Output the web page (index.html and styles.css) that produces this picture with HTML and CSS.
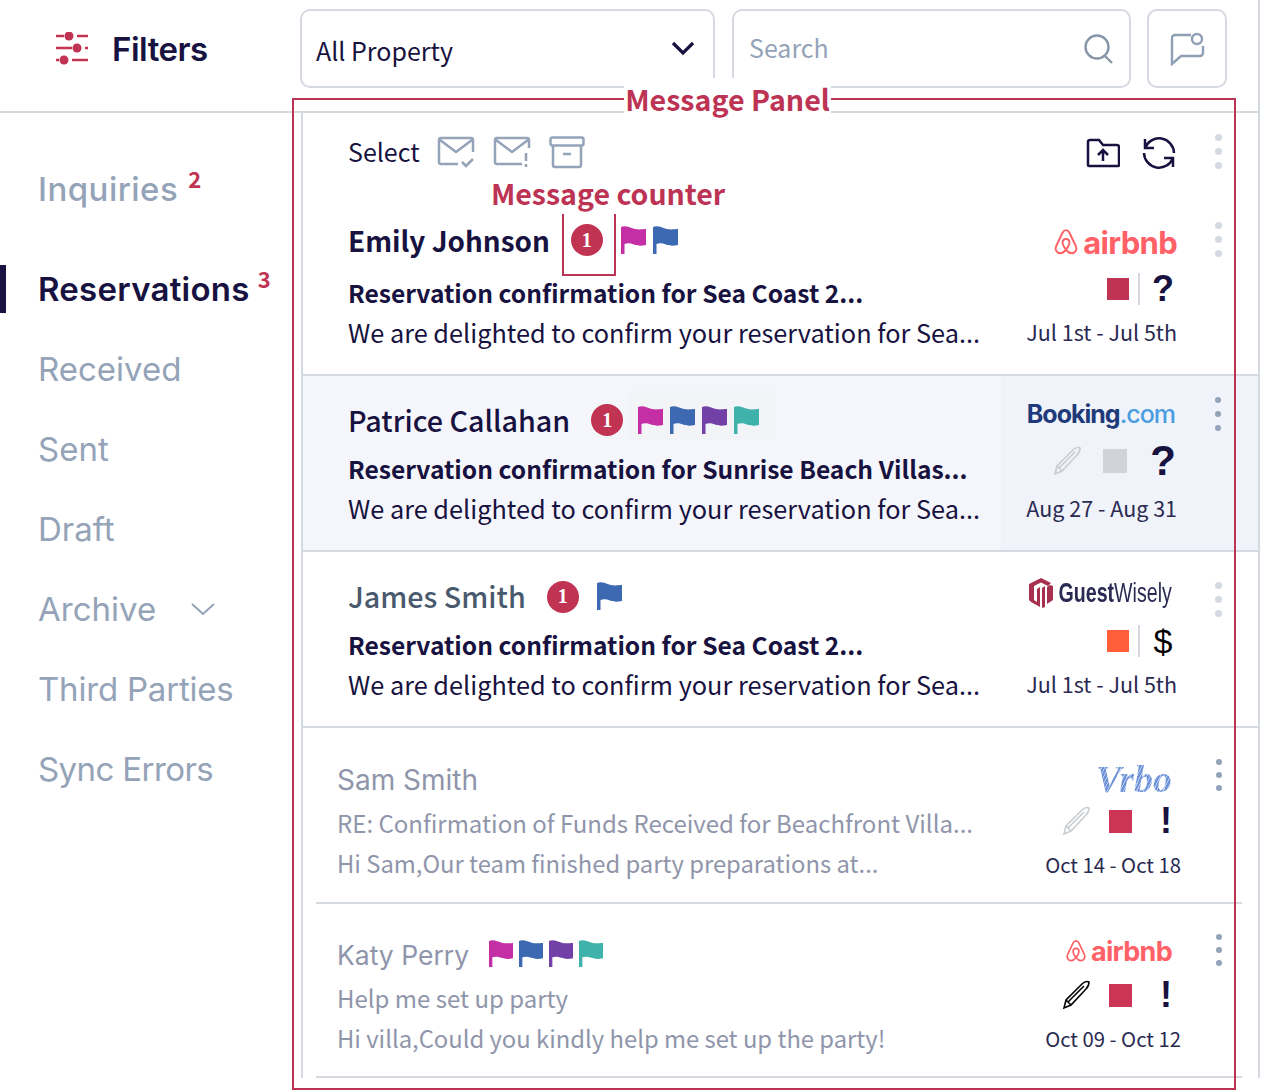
FILE: index.html
```html
<!DOCTYPE html>
<html lang="en">
<head>
  <meta charset="UTF-8" />
  <title>Message Panel</title>
  <link rel="stylesheet" href="styles.css">
</head>
<body>
  <svg class="defs" width="0" height="0">
    <symbol id="flag" viewBox="0 0 25 28">
      <path fill="currentColor" d="M0 1C5-1 9 2 14 3c4 1 8 0 11 0v16c-5 1-8 1-12-.5C9 17 6 17 3.5 18v10H0z"/>
    </symbol>
    <symbol id="pencil" viewBox="0 0 28 30">
      <path fill="none" stroke="currentColor" stroke-width="1.6" d="M2 28l2-8L20 4c2-2 5-3 7-2 0 3-1 5-3 7L9 25zM6 22L22 6M4 20l5 5"/>
    </symbol>
    <symbol id="belo" viewBox="0 0 24 26">
      <path fill="none" stroke="currentColor" stroke-width="1.8" d="M12 2c-1.400 0-2.400.8-3.200 2.400L3 16.500c-1.800 3.800.6 7 3.800 7 2 0 3.600-1.200 5.200-3.400 1.600 2.200 3.200 3.400 5.200 3.400 3.200 0 5.600-3.200 3.800-7L15.200 4.400C14.400 2.800 13.400 2 12 2zM12 20.100c-2-2.600-3.200-4.800-3.200-6.600 0-2 1.400-3.300 3.200-3.300s3.200 1.300 3.200 3.300c0 1.800-1.200 4-3.200 6.600z"/>
    </symbol>
  </svg>

  <div class="app">
    <header class="topbar">
      <div class="filters-head">
        <svg class="filters-icon" width="32" height="33" viewBox="0 0 32 33" fill="none" stroke="currentColor" stroke-width="2.600">
          <path d="M0 4h8M21 4h11M0 16h16M29 16h3M0 28h3M16 28h16"/>
          <circle cx="13" cy="4" r="4.500" fill="currentColor" stroke="none"/>
          <circle cx="21" cy="16" r="4.500" fill="currentColor" stroke="none"/>
          <circle cx="8" cy="28" r="4.500" fill="currentColor" stroke="none"/>
        </svg>
        <span class="filters-title">Filters</span>
      </div>
      <div class="box select-box">
        <span class="select-text">All Property</span>
        <svg width="24" height="15" viewBox="0 0 24 15" fill="none" stroke="#17123f" stroke-width="3.200"><path d="M2 2l10 10L22 2"/></svg>
      </div>
      <div class="box search-box">
        <span class="search-text">Search</span>
        <svg width="30" height="31" viewBox="0 0 30 31" fill="none" stroke="#8796a8" stroke-width="2.400"><circle cx="13" cy="14" r="11.500"/><path d="M21 23l7 7"/></svg>
      </div>
      <div class="box chat-box">
        <svg width="35" height="34" viewBox="0 0 35 34" fill="none" stroke="#8fa0b5" stroke-width="2.400"><path d="M21 3H5a3 3 0 0 0-3 3v26l9-8h19a3 3 0 0 0 3-3v-7"/><circle cx="27" cy="7" r="5"/></svg>
      </div>
    </header>

    <div class="body">
      <nav class="sidebar">
        <a class="nav-item nav-first">Inquiries<sup>2</sup></a>
        <a class="nav-item active">Reservations<sup>3</sup></a>
        <a class="nav-item">Received</a>
        <a class="nav-item">Sent</a>
        <a class="nav-item">Draft</a>
        <a class="nav-item">Archive<svg class="nav-chevron" width="24" height="13" viewBox="0 0 24 13" fill="none" stroke="currentColor" stroke-width="2"><path d="M1 1l11 10L23 1"/></svg></a>
        <a class="nav-item nav-third">Third Parties</a>
        <a class="nav-item nav-sync">Sync Errors</a>
      </nav>

      <main class="panel">
        <div class="toolbar">
          <span class="select-label">Select</span>
          <svg class="tool-icon" width="38" height="33" viewBox="0 0 38 33"><path d="M36 16V4a2 2 0 0 0-2-2H4a2 2 0 0 0-2 2v22a2 2 0 0 0 2 2h17M3 4l16 12L35 4M25 26l4 4 7-7"/></svg>
          <svg class="tool-icon" width="38" height="33" viewBox="0 0 38 33"><path d="M36 12V4a2 2 0 0 0-2-2H4a2 2 0 0 0-2 2v22a2 2 0 0 0 2 2h25M3 4l16 12L35 4M33 17v8M33 28v3"/></svg>
          <svg class="tool-icon" width="36" height="33" viewBox="0 0 36 33"><rect x="1.500" y="1.500" width="33" height="8" rx="2"/><path d="M4 10v19a2 2 0 0 0 2 2h24a2 2 0 0 0 2-2V10M14 18h8"/></svg>
          <span class="spacer"></span>
          <svg class="tool-icon dark" width="34" height="30" viewBox="0 0 34 30"><path d="M2 4a2 2 0 0 1 2-2h9l4 5h14a2 2 0 0 1 2 2v18a1 1 0 0 1-1 1H3a1 1 0 0 1-1-1zM17 23V12M12 17l5-5 5 5"/></svg>
          <svg class="tool-icon dark refresh" width="34" height="34" viewBox="0 0 34 34"><path d="M3 12A15 15 0 0 1 32 17M3 3v9h9M31 22A15 15 0 0 1 2 17M31 31v-9h-9"/></svg>
          <span class="dots toolbar-dots"><i></i><i></i><i></i></span>
        </div>

        <article class="row row-1">
          <div class="main">
            <div class="head">
              <span class="name">Emily Johnson</span>
              <span class="badge">1</span>
              <span class="flags">
                <svg class="flag magenta"><use href="#flag"/></svg>
                <svg class="flag blue"><use href="#flag"/></svg>
              </span>
            </div>
            <div class="subject">Reservation confirmation for Sea Coast 2...</div>
            <div class="preview">We are delighted to confirm your reservation for Sea...</div>
          </div>
          <div class="side">
            <div class="logo airbnb"><svg class="belo"><use href="#belo"/></svg><span>airbnb</span></div>
            <div class="status">
              <span class="square red"></span><span class="divider"></span><span class="mark">?</span>
            </div>
            <div class="dates">Jul 1st - Jul 5th</div>
          </div>
          <span class="dots"><i></i><i></i><i></i></span>
        </article>

        <article class="row row-2 selected">
          <div class="main">
            <div class="head">
              <span class="name">Patrice Callahan</span>
              <span class="badge">1</span>
              <span class="flags flags-box">
                <svg class="flag magenta"><use href="#flag"/></svg>
                <svg class="flag blue"><use href="#flag"/></svg>
                <svg class="flag purple"><use href="#flag"/></svg>
                <svg class="flag teal"><use href="#flag"/></svg>
              </span>
            </div>
            <div class="subject">Reservation confirmation for Sunrise Beach Villas...</div>
            <div class="preview">We are delighted to confirm your reservation for Sea...</div>
          </div>
          <div class="side">
            <div class="logo booking">Booking<span>.com</span></div>
            <div class="status">
              <svg class="pencil muted"><use href="#pencil"/></svg>
              <span class="square grey"></span><span class="mark big">?</span>
            </div>
            <div class="dates">Aug 27 - Aug 31</div>
          </div>
          <span class="dots strong"><i></i><i></i><i></i></span>
        </article>

        <article class="row row-3">
          <div class="main">
            <div class="head">
              <span class="name slate">James Smith</span>
              <span class="badge">1</span>
              <span class="flags">
                <svg class="flag blue"><use href="#flag"/></svg>
              </span>
            </div>
            <div class="subject">Reservation confirmation for Sea Coast 2...</div>
            <div class="preview">We are delighted to confirm your reservation for Sea...</div>
          </div>
          <div class="side">
            <div class="logo guestwisely">
              <svg width="24" height="30" viewBox="0 0 24 30"><path fill="#a8304f" d="M12 0l10 5-3 3-7-3.500L5 8v14l3 2V11l3-2v20L2 24 0 22V6zM13 10l3-2v21l-3 1zM18 9l3-2 3 1v14l-6 4z"/></svg>
              <span class="gw-text"><b>Guest</b>Wisely</span>
            </div>
            <div class="status">
              <span class="square orange"></span><span class="divider"></span><span class="mark black">$</span>
            </div>
            <div class="dates">Jul 1st - Jul 5th</div>
          </div>
          <span class="dots"><i></i><i></i><i></i></span>
        </article>

        <article class="row row-4 read">
          <div class="main">
            <div class="head">
              <span class="name">Sam Smith</span>
            </div>
            <div class="subject">RE: Confirmation of Funds Received for Beachfront Villa...</div>
            <div class="preview">Hi Sam,Our team finished party preparations at...</div>
          </div>
          <div class="side">
            <div class="logo vrbo">Vrbo</div>
            <div class="status">
              <svg class="pencil muted"><use href="#pencil"/></svg>
              <span class="square red-bright"></span><span class="mark">!</span>
            </div>
            <div class="dates">Oct 14 - Oct 18</div>
          </div>
          <span class="dots strong"><i></i><i></i><i></i></span>
        </article>

        <article class="row row-5 read">
          <div class="main">
            <div class="head">
              <span class="name">Katy Perry</span>
              <span class="flags">
                <svg class="flag magenta"><use href="#flag"/></svg>
                <svg class="flag blue"><use href="#flag"/></svg>
                <svg class="flag purple"><use href="#flag"/></svg>
                <svg class="flag teal"><use href="#flag"/></svg>
              </span>
            </div>
            <div class="subject">Help me set up party</div>
            <div class="preview">Hi villa,Could you kindly help me set up the party!</div>
          </div>
          <div class="side">
            <div class="logo airbnb"><svg class="belo"><use href="#belo"/></svg><span>airbnb</span></div>
            <div class="status">
              <svg class="pencil"><use href="#pencil"/></svg>
              <span class="square red-bright"></span><span class="mark">!</span>
            </div>
            <div class="dates">Oct 09 - Oct 12</div>
          </div>
          <span class="dots strong"><i></i><i></i><i></i></span>
        </article>
      </main>
    </div>

    <!-- annotations drawn over the screenshot -->
    <div class="note-frame"></div>
    <div class="note-title">Message Panel</div>
    <div class="note-counter">Message counter</div>
    <div class="note-bracket"></div>
  </div>
</body>
</html>
```

FILE: styles.css
```css
* {
  box-sizing: border-box;
}
html, body {
  margin: 0;
  background: #fff;
}
body {
  min-height: 1090px;
  font-family: "Noto Sans CJK SC", "Noto Sans", sans-serif;
  color: #17123f;
}
.defs {
  position: absolute;
}
.app {
  position: relative;
  width: 1260px;
  height: 1078px;
  border-right: 2px solid #d5d9e2;
}

/* top bar */
.topbar {
  display: flex;
  align-items: flex-start;
  height: 113px;
  padding-top: 9px;
  border-bottom: 2px solid #d5d9e2;
}
.filters-head {
  display: flex;
  align-items: center;
  width: 300px;
  height: 79px;
  padding-left: 56px;
}
.filters-icon {
  flex: none;
  color: #c03353;
}
.filters-title {
  margin-left: 24px;
  font-family: Inter, sans-serif;
  font-size: 33px;
  font-weight: 600;
  letter-spacing: -0.5px;
}
.box {
  display: flex;
  align-items: center;
  height: 79px;
  border: 2px solid #d5d9e2;
  border-radius: 10px;
  font-size: 25px;
}
.select-box {
  justify-content: space-between;
  width: 415px;
  padding: 0 18px 0 14px;
}
.select-text {
  margin-top: 2px;
}
.search-box {
  justify-content: space-between;
  width: 399px;
  margin-left: 17px;
  padding: 0 15px 0 15px;
  color: #94a3b8;
}
.search-text {
  margin-bottom: 4px;
}
.chat-box {
  justify-content: center;
  width: 80px;
  margin-left: 16px;
}

/* sidebar */
.body {
  display: flex;
}
.sidebar {
  display: flex;
  flex: none;
  flex-direction: column;
  width: 301px;
  padding-top: 36px;
}
.nav-item {
  display: flex;
  align-items: center;
  height: 80px;
  padding-left: 38px;
  font-family: Inter, sans-serif;
  font-size: 33px;
  color: #94a3b8;
  white-space: nowrap;
}
.nav-first {
  margin-bottom: 20px;
  font-weight: 500;
  letter-spacing: 0.45px;
}
.nav-third {
  letter-spacing: -0.2px;
}
.nav-sync {
  letter-spacing: -0.6px;
}
.nav-item sup {
  align-self: flex-start;
  margin: 14px 0 0 10px;
  font-family: "Noto Sans CJK SC", sans-serif;
  font-size: 22px;
  font-weight: 700;
  line-height: 30px;
  color: #c03353;
}
.nav-item.active {
  position: relative;
  font-weight: 600;
  letter-spacing: 0.25px;
  color: #17123f;
}
.nav-item.active sup {
  margin-left: 8px;
}
.nav-item.active::before {
  content: "";
  position: absolute;
  left: 0;
  top: 16px;
  width: 6px;
  height: 48px;
  background: #17123f;
}
.nav-chevron {
  margin-left: 35px;
}

/* message panel */
.panel {
  flex: 1;
  min-width: 0;
  border-left: 2px solid #d5d9e2;
}
.toolbar {
  display: flex;
  align-items: center;
  height: 87px;
  padding: 0 0 8px 45px;
}
.select-label {
  width: 89px;
  margin-bottom: 3px;
  font-size: 25px;
}
.tool-icon {
  margin-right: 18px;
  fill: none;
  stroke: #94a3b8;
  stroke-width: 2.500;
}
.tool-icon.dark {
  margin-right: 22px;
  stroke: #17123f;
}
.tool-icon.refresh {
  margin-right: 0;
}
.spacer {
  flex: 1;
}
.dots {
  display: flex;
  flex: none;
  flex-direction: column;
  gap: 7px;
  margin: 22px 36px 0 38px;
  align-self: flex-start;
}
.dots i {
  width: 7px;
  height: 7px;
  border-radius: 50%;
  background: #d5d9e2;
}
.dots.strong i {
  width: 6px;
  height: 6px;
  background: #93a3b8;
}
.toolbar-dots {
  margin: 21px 36px 0 39px;
}

.row {
  display: flex;
  height: 176px;
  border-bottom: 2px solid #d5d9e2;
}
.main {
  flex: 1;
  min-width: 0;
  padding-left: 45px;
  white-space: nowrap;
}
.head {
  display: flex;
  align-items: center;
  height: 40px;
  margin-bottom: 6px;
}
.name {
  margin-bottom: 4px;
  font-size: 28.700px;
  font-weight: 500;
  line-height: 40px;
}
.row-1 .name {
  font-size: 27.900px;
  font-weight: 600;
}
.name.slate {
  color: #4a5a6e;
}
.badge {
  display: flex;
  align-items: center;
  justify-content: center;
  width: 32px;
  height: 32px;
  margin: 0 0 4px 21px;
  border-radius: 50%;
  background: #c03353;
  color: #fff;
  font-family: "Liberation Serif", serif;
  font-size: 20px;
  font-weight: 700;
}
.flags {
  display: flex;
  gap: 7px;
  margin: 0 0 4px 18px;
}
.flag {
  display: block;
  width: 25px;
  height: 28px;
}
.flags-box {
  margin: 0 0 14px 6px;
  padding: 15px 16px 6px 9px;
  background: #f2f4f8;
}
.magenta { color: #c42fa5; }
.blue { color: #3d68b2; }
.purple { color: #7340a8; }
.teal { color: #3fb2ac; }
.subject {
  font-size: 24.600px;
  font-weight: 700;
  line-height: 40px;
}
.preview {
  font-size: 25.300px;
  line-height: 40px;
}

.side {
  display: flex;
  flex: none;
  flex-direction: column;
  align-items: flex-end;
}
.logo {
  display: flex;
  align-items: center;
  height: 40px;
  margin-bottom: 7px;
}
.airbnb {
  color: #ff6167;
  font-family: Inter, sans-serif;
  font-size: 31px;
  font-weight: 700;
  letter-spacing: -0.7px;
}
.belo {
  width: 26px;
  height: 28px;
  margin-right: 4px;
}
.booking {
  margin-right: 2px;
  color: #1f3a7a;
  font-family: Inter, sans-serif;
  font-size: 25px;
  font-weight: 700;
  letter-spacing: -1px;
}
.booking span {
  color: #4a9de0;
  font-weight: 500;
}
.guestwisely {
  margin-right: 5px;
  color: #2a2a52;
  font-family: "Liberation Sans", sans-serif;
  font-size: 28px;
}
.gw-text {
  margin-left: -43px;
  transform: scaleX(0.7);
  transform-origin: right center;
}
.vrbo {
  font-family: "Liberation Serif", serif;
  font-size: 38px;
  font-style: italic;
  font-weight: 700;
  background: repeating-linear-gradient(115deg, #6f93d8 0 2px, #b7c9ec 2px 3px);
  -webkit-background-clip: text;
  background-clip: text;
  color: transparent;
}
.status {
  display: flex;
  align-items: center;
  height: 40px;
  margin-bottom: 3px;
}
.square {
  width: 22px;
  height: 22px;
}
.red { background: #c03353; }
.red-bright { background: #cd3557; }
.grey { background: #d0d3d9; }
.orange { background: #ff5f38; }
.divider {
  width: 2px;
  height: 32px;
  margin: 0 8px 0 9px;
  background: #d5d9e2;
}
.mark {
  width: 30px;
  margin-right: -1px;
  font-family: "Liberation Sans", sans-serif;
  font-size: 36px;
  font-weight: 700;
  line-height: 40px;
  text-align: center;
}
.mark.big {
  font-size: 42px;
}
.mark.black {
  color: #000;
  font-weight: 400;
  font-size: 34px;
}
.pencil {
  width: 28px;
  height: 30px;
  color: #000;
}
.pencil.muted {
  color: #c9ccd2;
}
.dates {
  font-size: 21.500px;
  line-height: 40px;
  color: #2a2a52;
  white-space: nowrap;
}

.row-1 .main { padding-top: 22px; }
.row-1 .head { margin-bottom: 10px; }
.row-1 .side { padding-top: 22px; }

.selected {
  background: linear-gradient(90deg, #f5f6fb 0 698px, #f0f3f9 698px);
}
.selected .side {
  padding-top: 18px;
}
.row-2 .main { padding-top: 26px; }
.row-2 .status { margin-bottom: 7px; }
.row-2 .square { width: 24px; height: 24px; margin: 0 21px 0 22px; }
.row-2 .dots { gap: 8px; margin: 21px 37px 0 38px; }

.row-3 .main { padding-top: 26px; }
.row-3 .side { padding-top: 21px; }
.row-3 .logo { margin-bottom: 8px; }
.row-3 .dots { margin-top: 30px; }
.row-3 .badge { margin-bottom: 3px; }

.read {
  margin: 0 16px 0 13px;
}
.read .main {
  padding-left: 21px;
  color: #8f95aa;
}
.read .name {
  margin-bottom: 0;
  font-family: Inter, sans-serif;
  font-size: 28px;
  font-weight: 400;
  color: #8f95aa;
}
.read .subject {
  font-size: 24px;
  font-weight: 400;
}
.read .preview {
  font-size: 23.800px;
}
.read .dates {
  font-size: 20.300px;
}
.read .logo { margin-right: 9px; }
.read .square { width: 23px; height: 23px; margin: 0 19px; }
.read .mark { margin-right: 0; }
.read .dots { margin: 31px 20px 0 35px; }
.row-4 .main { padding-top: 32px; }
.row-4 .side { padding-top: 31px; }
.row-4 .logo { margin-bottom: 2px; }
.row-4 .head { margin-bottom: 3px; }
.row-5 { height: 174px; }
.row-5 .main { padding-top: 31px; }
.row-5 .head { margin-bottom: 3px; }
.row-5 .name { font-size: 26.500px; }
.row-5 .side { padding-top: 27px; }
.row-5 .logo { margin-bottom: 4px; font-size: 27px; }
.row-5 .belo { width: 22px; height: 24px; }
.row-5 .flags { gap: 6px; margin: 0 0 3px 20px; }
.row-5 .flag { width: 24px; height: 27px; }
.row-5 .dots { margin-top: 30px; }

/* annotations */
.note-frame {
  position: absolute;
  left: 292px;
  top: 98px;
  width: 944px;
  height: 992px;
  border: 2px solid #bd3354;
}
.note-title {
  position: absolute;
  left: 624px;
  top: 78px;
  width: 207px;
  height: 35px;
  background: #fff;
  color: #bd3354;
  font-size: 28.600px;
  font-weight: 700;
  line-height: 41px;
  text-align: center;
  white-space: nowrap;
}
.note-counter {
  position: absolute;
  left: 491px;
  top: 173px;
  color: #bd3354;
  font-size: 28.500px;
  font-weight: 700;
  line-height: 40px;
  white-space: nowrap;
}
.note-bracket {
  position: absolute;
  left: 562px;
  top: 214px;
  width: 54px;
  height: 62px;
  border: 2px solid #bd3354;
  border-top: none;
}
```
